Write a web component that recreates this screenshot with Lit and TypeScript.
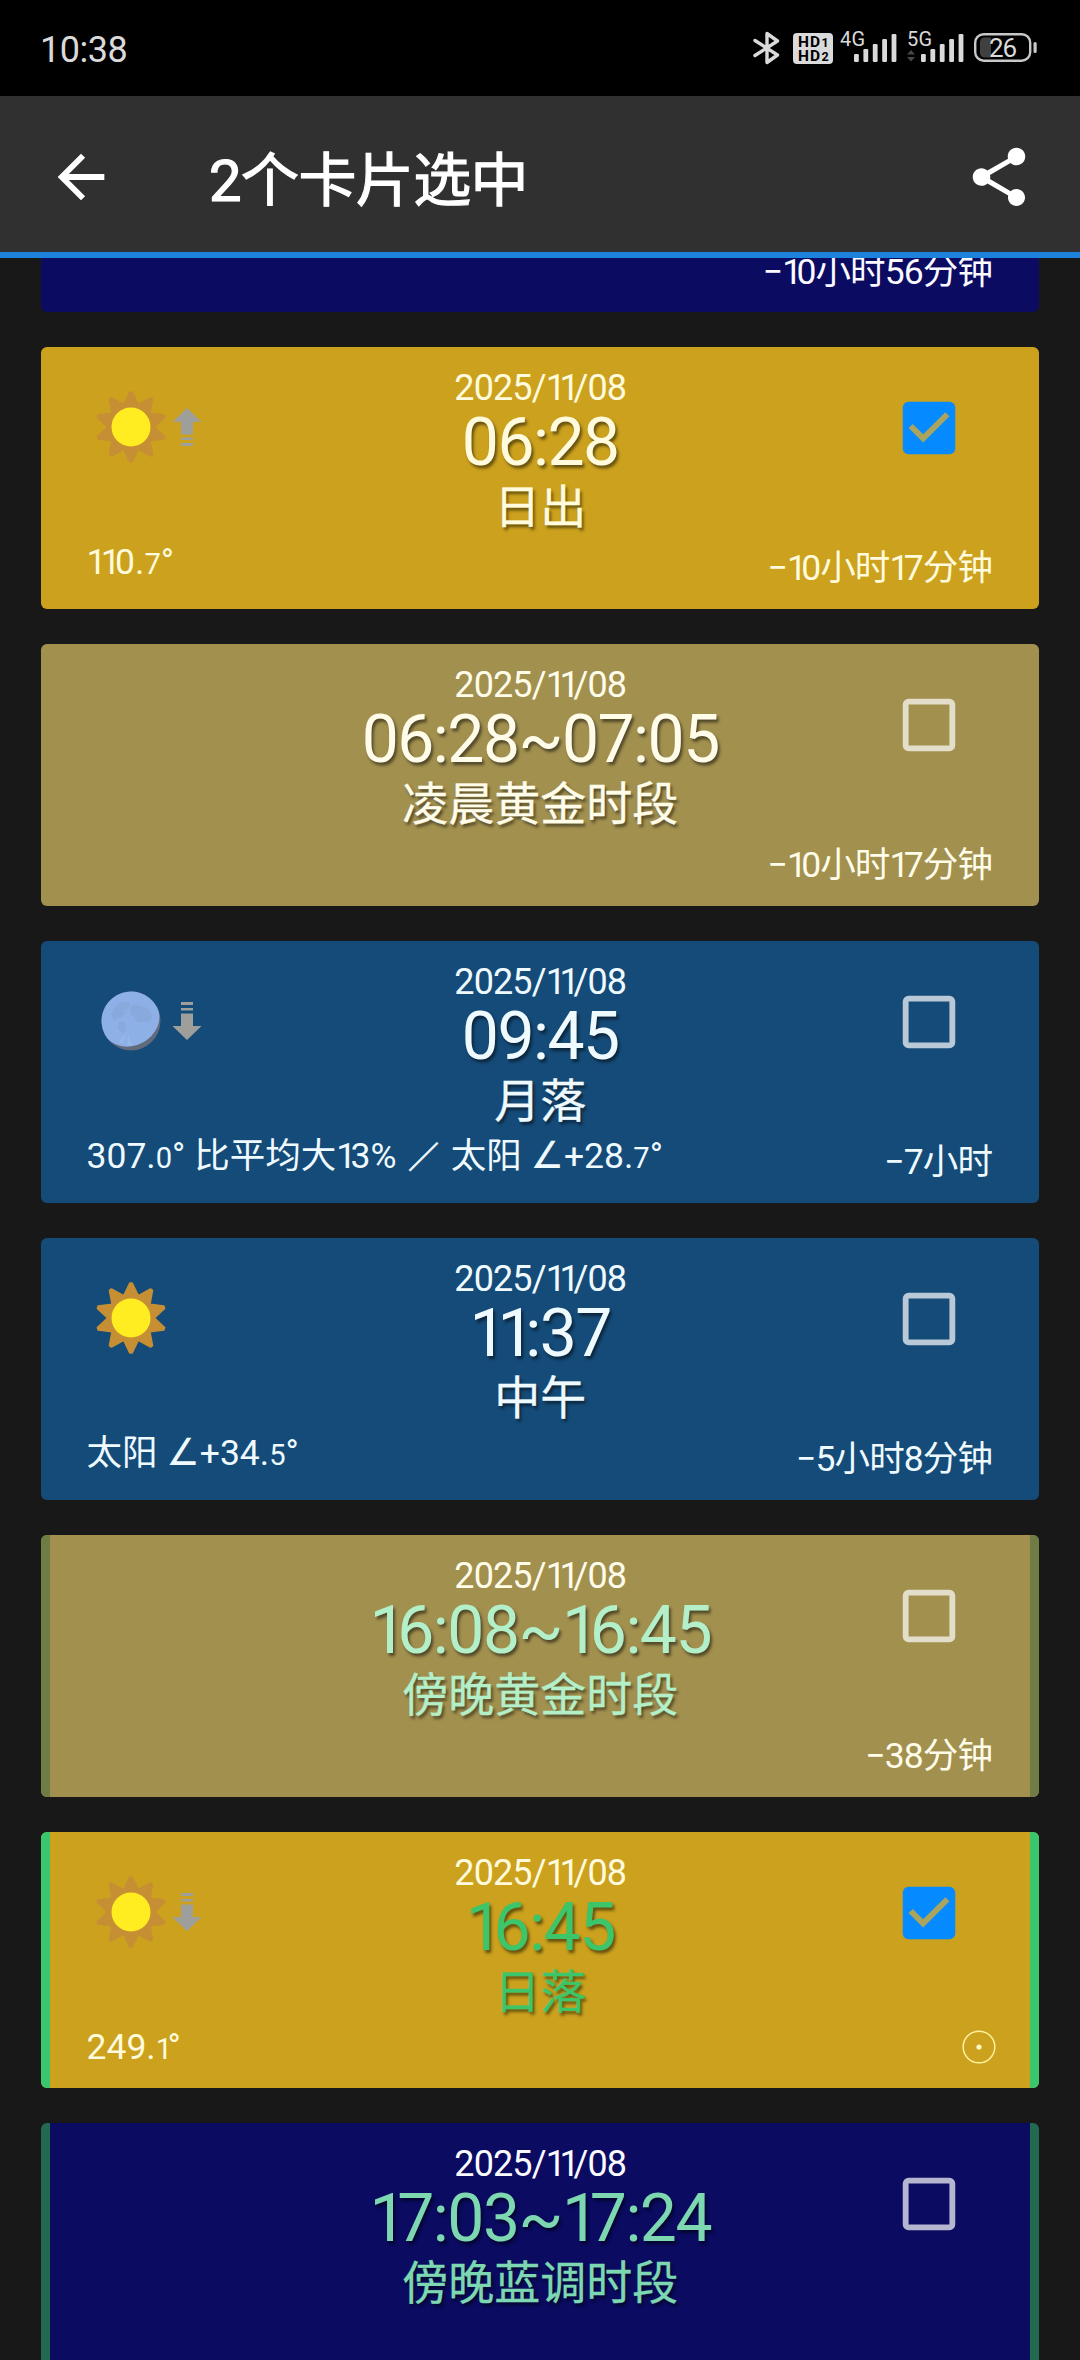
import { LitElement, html, svg, css, nothing, TemplateResult } from "lit";
import { customElement, property, state } from "lit/decorators.js";
import { classMap } from "lit/directives/class-map.js";

type Tone = "navy" | "gold" | "khaki" | "blue";
type Accent = "" | "olive" | "green" | "teal";

interface SkyEvent {
  tone: Tone;
  accent?: Accent;
  partial?: boolean;
  short?: boolean;
  date?: string;
  time?: string;
  label?: string;
  body?: "sun" | "moon";
  arrow?: "up" | "down";
  detail?: string;
  offset?: string;
  now?: boolean;
  checked?: boolean;
}

const EVENTS: SkyEvent[] = [
  { tone: "navy", partial: true, offset: "−10小时56分钟" },
  { tone: "gold", date: "2025/11/08", time: "06:28", label: "日出", body: "sun", arrow: "up", detail: "110.7°", offset: "−10小时17分钟", checked: true },
  { tone: "khaki", date: "2025/11/08", time: "06:28~07:05", label: "凌晨黄金时段", offset: "−10小时17分钟" },
  { tone: "blue", date: "2025/11/08", time: "09:45", label: "月落", body: "moon", arrow: "down", detail: "307.0° 比平均大13% ／ 太阳 ∠+28.7°", offset: "−7小时" },
  { tone: "blue", date: "2025/11/08", time: "11:37", label: "中午", body: "sun", detail: "太阳 ∠+34.5°", offset: "−5小时8分钟" },
  { tone: "khaki", accent: "olive", date: "2025/11/08", time: "16:08~16:45", label: "傍晚黄金时段", offset: "−38分钟" },
  { tone: "gold", accent: "green", short: true, date: "2025/11/08", time: "16:45", label: "日落", body: "sun", arrow: "down", detail: "249.1°", now: true, checked: true },
  { tone: "navy", accent: "teal", date: "2025/11/08", time: "17:03~17:24", label: "傍晚蓝调时段" },
];

/* Sets the digit 1 tighter, decimals smaller, and sizes the angle and slash signs. */
function figures(text: string): TemplateResult[] {
  return text.split(/(\.\d|1+|∠|／)/).filter(Boolean).map((part) => {
    if (part[0] === "." && part.length === 2) {
      return html`.<span class=${part[1] === "1" ? "dec one" : "dec"}>${part[1]}</span>`;
    }
    if (part[0] === "1") return html`<span class="one">${part}</span>`;
    if (part === "∠") return html`<span class="angle">∠</span>`;
    if (part === "／") return html`<span class="slash">／</span>`;
    return html`${part}`;
  });
}

const figureStyles = css`
  .one { letter-spacing: -0.16em; }
  .dec { font-size: 0.82em; }
  .angle { font-family: "DejaVu Sans", sans-serif; font-size: 1.05em; line-height: 1; }
  .slash { font-size: 0.86em; margin: 0 0.1em; -webkit-text-stroke: 0.8px currentColor; }
`;

function rays(): string {
  const points: string[] = [];
  for (let i = 0; i < 10; i++) {
    const tip = (i * 36 - 90) * (Math.PI / 180);
    const valley = tip + 18 * (Math.PI / 180);
    for (const off of [-0.035, 0.035]) {
      points.push(`${(35 * Math.cos(tip + off)).toFixed(2)},${(35 * Math.sin(tip + off)).toFixed(2)}`);
    }
    points.push(`${(23.5 * Math.cos(valley)).toFixed(2)},${(23.5 * Math.sin(valley)).toFixed(2)}`);
  }
  return points.join(" ");
}
const RAYS = rays();

@customElement("status-bar")
export class StatusBar extends LitElement {
  static styles = css`
    :host { display: flex; align-items: center; justify-content: space-between; height: 96px; box-sizing: border-box; padding: 0 43px 0 40px; background: #000; color: #dadada; }
    .clock { font-size: 36px; line-height: 96px; margin-top: 3px; letter-spacing: -0.5px; }
    .icons { display: flex; align-items: center; height: 36px; }
    .icons svg { display: block; flex: none; overflow: visible; }
    .bt { margin-right: 13px; }
    .hd { margin-right: 7px; }
    .sig { margin-right: 10px; }
    .icons text { font-family: Roboto, "Noto Sans", sans-serif; }
  `;
  private signal(name: string, data: boolean) {
    return svg`
      <text x="0" y="15.5" font-size="20" textLength="25" fill="#dadada">${name}</text>
      ${[0, 1, 2, 3, 4].map((i) => svg`<rect x=${14 + i * 9.4} y=${24 - i * 5} width="4.8" height=${8 + i * 5} rx="1.2" fill="#dadada"/>`)}
      ${data ? svg`<path d="M0 24.5l4-4.5 4 4.5zM0 27h8l-4 4.500z" fill="#484848"/>` : nothing}
    `;
  }
  render() {
    return html`
      <div class="clock">10:38</div>
      <div class="icons">
        <svg class="bt" width="27" height="36" viewBox="0 0 27 36" fill="none" stroke="#dadada" stroke-width="3.4" stroke-linejoin="round" stroke-linecap="round"><path d="M2 10.500L24.500 25 14 32.500V3.500L24.500 11 2 25.500"/></svg>
        <svg class="hd" width="40" height="36" viewBox="0 0 40 36">
          <rect x="0" y="3" width="40" height="31" rx="4" fill="#dadada"/>
          <g fill="#000" font-weight="700" font-size="15.500"><text x="5" y="17" textLength="22">HD</text><text x="5" y="31" textLength="22">HD</text></g>
          <g fill="#000" font-weight="700" font-size="12.500"><text x="28.500" y="17">1</text><text x="28.500" y="31">2</text></g>
        </svg>
        <svg class="sig" width="57" height="36" viewBox="0 0 57 36">${this.signal("4G", false)}</svg>
        <svg class="sig" width="57" height="36" viewBox="0 0 57 36">${this.signal("5G", true)}</svg>
        <svg width="63" height="36" viewBox="0 0 63 36">
          <rect x="1.200" y="4.200" width="55" height="26.500" rx="8.500" fill="none" stroke="#c8c8c8" stroke-width="2.400"/>
          <path d="M14 7.500H10.500a4.500 4.500 0 0 0-4.500 4.500v11a4.500 4.500 0 0 0 4.500 4.500H17V7.500z" fill="#404040"/>
          <rect x="59.500" y="12" width="3.200" height="11" rx="1.600" fill="#c8c8c8"/>
          <text x="29" y="26.500" font-size="26" text-anchor="middle" textLength="28" fill="#dadada">26</text>
        </svg>
      </div>
    `;
  }
}

@customElement("title-bar")
export class TitleBar extends LitElement {
  @property({ type: Number }) count = 0;
  static styles = css`
    :host { display: flex; align-items: center; height: 162px; box-sizing: border-box; padding: 0 46px 0 46px; background: #303030; border-bottom: 6px solid #1c82dc; color: #fff; }
    .icon { width: 70px; height: 70px; flex: none; display: block; margin-top: 6px; }
    .title { flex: 1; margin-left: 93px; margin-top: 13px; font-size: 58px; letter-spacing: -0.6px; line-height: 80px; -webkit-text-stroke: 1.2px #fff; }
  `;
  render() {
    return html`
      <svg class="icon" viewBox="0 0 24 24" fill="#fff"><path d="M20 11H7.830l5.590-5.590L12 4l-8 8 8 8 1.410-1.410L7.830 13H20v-2z"/></svg>
      <div class="title">${this.count}个卡片选中</div>
      <svg class="icon" viewBox="0 0 24 24" fill="#fff"><path d="M18 16.080c-.760 0-1.440.300-1.960.770L8.910 12.700c.050-.230.090-.460.090-.700s-.040-.470-.090-.700l7.050-4.110c.540.500 1.250.810 2.040.810 1.660 0 3-1.340 3-3s-1.340-3-3-3-3 1.340-3 3c0 .240.040.470.090.700L8.040 9.810C7.500 9.310 6.790 9 6 9c-1.660 0-3 1.340-3 3s1.340 3 3 3c.790 0 1.500-.310 2.040-.810l7.120 4.160c-.050.210-.080.430-.080.650 0 1.610 1.310 2.920 2.920 2.920s2.920-1.310 2.920-2.920-1.310-2.920-2.920-2.920z"/></svg>
    `;
  }
}

@customElement("event-card")
export class EventCard extends LitElement {
  @property({ attribute: false }) event!: SkyEvent;
  static styles = [
    figureStyles,
    css`
      :host { display: block; flex: none; }
      .card { position: relative; box-sizing: border-box; height: 262px; padding: 21px 47px 0 46px; border-radius: 6px; overflow: hidden; }
      .card.short { height: 256px; }
      .card.partial { height: 54px; padding-top: 0; border-radius: 0 0 6px 6px; }
      .gold { background: #cba11d; color: #fffbdc; }
      .khaki { background: #a2904f; color: #fffcea; }
      .blue { background: #154b78; color: #effaff; }
      .navy { background: #0a0b61; color: #fafaff; }
      .edge { position: absolute; top: 0; bottom: 0; width: 9px; }
      .edge.left { left: 0; }
      .edge.right { right: 0; }
      .olive .edge { background: #6f7d45; }
      .green .edge { background: #39c66d; }
      .teal .edge { background: #23694f; }
      .head { display: grid; grid-template-columns: 200px 1fr 200px; height: 169px; margin-right: -2px; }
      .bodies { display: flex; padding: 22px 0 0 7px; }
      .bodies svg { display: block; flex: none; }
      .arrow { margin: 18px 0 0 4px; }
      .center { display: flex; flex-direction: column; align-items: center; white-space: nowrap; }
      .date { font-size: 36px; line-height: 40px; letter-spacing: -0.9px; }
      .date .one { letter-spacing: -0.175em; }
      .time { font-size: 66px; line-height: 70px; letter-spacing: -1.5px; text-shadow: 2px 3px 3px rgba(0, 0, 0, 0.5); }
      .time .one { letter-spacing: -0.14em; }
      .label { font-family: "Noto Sans CJK SC", "Noto Sans", sans-serif; font-size: 46px; line-height: 50px; text-shadow: 2px 3px 3px rgba(0, 0, 0, 0.5); -webkit-text-stroke: 0.3px currentColor; }
      .olive .time, .olive .label { color: #b3efc8; }
      .green .time, .green .label { color: #3cc569; }
      .teal .time, .teal .label { color: #7dd8b2; }
      .check { display: block; width: 70px; height: 70px; justify-self: end; margin: 25px 30px 0 0; }
      .foot { display: flex; justify-content: space-between; padding-top: 3px; font-size: 35.5px; line-height: 44px; white-space: nowrap; }
      .offset { margin: 6px 0 0 auto; letter-spacing: -0.9px; }
      .partial .offset { margin-top: -11px; }
      .now { display: block; margin: 5px -4px 0 auto; }
    `,
  ];
  private sun() {
    return html`<svg width="74" height="74" viewBox="-37 -37 74 74"><polygon points=${RAYS} fill="#c68f34" stroke="#c68f34" stroke-width="1.500" stroke-linejoin="round"/><circle r="19.500" fill="#ffed22"/></svg>`;
  }
  private moon() {
    return html`<svg width="74" height="74" viewBox="-37 -37 74 74">
      <circle r="29.500" fill="#606a7b"/>
      <g transform="rotate(62)"><path d="M0-29.500A29.500 29.500 0 0 0 0 29.500A24.500 29.500 0 0 0 0-29.500z" fill="#8db0e6"/></g>
      <g fill="#84a4d4" opacity="0.550"><path d="M-19-8c3-9 10-12 17-11 3 4-1 7-5 8 2 5-3 9-7 8-2 4-6 1-5-5z"/><path d="M0-15c6-3 18 1 20 8 2 7-2 10-8 7-3 4-9 1-8-4-5-1-6-7-4-11z"/><path d="M-11 1c5-2 7 2 5 6 2 4-3 7-5 3-3-2-3-6 0-9z"/></g>
      <path d="M-4 25l1-13 4 12zM-12 21l7-10-3 12z" fill="#9dbdf0" opacity="0.500"/>
    </svg>`;
  }
  private arrow(dir: "up" | "down") {
    return html`<svg class="arrow" width="30" height="38" viewBox="0 0 30 38" fill="#9e9e9b"><g transform=${dir === "up" ? "translate(0 38) scale(1 -1)" : "translate(0 0)"}><path d="M9 0h12v3H9zM9 6h12v2.500H9zM9 11.500h12V24h8.500L15 38 .5 24H9z"/></g></svg>`;
  }
  private check(on: boolean) {
    return on
      ? html`<svg class="check" viewBox="0 0 24 24"><rect x="3" y="3" width="18" height="18" rx="2" fill="#058bff"/><path d="M10 17l-5-5 1.410-1.410L10 14.170l7.590-7.590L19 8z" fill="#aaa45d"/></svg>`
      : html`<svg class="check" viewBox="0 0 24 24"><rect x="4" y="4" width="16" height="16" rx="1" fill="none" stroke="#fff" stroke-opacity="0.700" stroke-width="2"/></svg>`;
  }
  render() {
    const e = this.event;
    const classes: Record<string, boolean> = { card: true, [e.tone]: true, partial: !!e.partial, short: !!e.short };
    if (e.accent) classes[e.accent] = true;
    return html`
      <div class=${classMap(classes)}>
        ${e.accent ? html`<div class="edge left"></div><div class="edge right"></div>` : nothing}
        ${e.partial ? nothing : html`
          <div class="head">
            <div class="bodies">
              ${e.body === "sun" ? this.sun() : e.body === "moon" ? this.moon() : nothing}
              ${e.arrow ? this.arrow(e.arrow) : nothing}
            </div>
            <div class="center">
              <div class="date">${figures(e.date!)}</div>
              <div class="time">${figures(e.time!)}</div>
              <div class="label">${e.label}</div>
            </div>
            ${this.check(!!e.checked)}
          </div>`}
        <div class="foot">
          ${e.detail ? html`<div>${figures(e.detail)}</div>` : nothing}
          ${e.offset ? html`<div class="offset">${figures(e.offset)}</div>` : nothing}
          ${e.now ? html`<svg class="now" width="34" height="34" viewBox="-17 -17 34 34"><circle r="15.800" fill="none" stroke="#fff3a0" stroke-width="1.500"/><circle r="2.600" fill="#fff8c0"/></svg>` : nothing}
        </div>
      </div>
    `;
  }
}

@customElement("app-root")
export class AppRoot extends LitElement {
  @state() private events = EVENTS;
  static styles = css`
    :host { display: flex; flex-direction: column; width: 1080px; height: 2360px; overflow: hidden; background: #181818; font-family: Roboto, "Noto Sans CJK SC", "Noto Sans", sans-serif; }
    .list { flex: 1; min-height: 0; overflow: hidden; display: flex; flex-direction: column; gap: 35px; padding: 0 41px 0 40.5px; }
  `;
  render() {
    return html`
      <status-bar></status-bar>
      <title-bar .count=${this.events.filter((e) => e.checked).length}></title-bar>
      <div class="list">${this.events.map((e) => html`<event-card .event=${e}></event-card>`)}</div>
    `;
  }
}
